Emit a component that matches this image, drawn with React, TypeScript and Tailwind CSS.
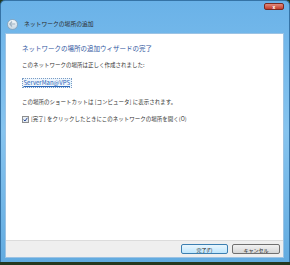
export default function App() {
  return (
    <div className="w-[290px] h-[265px] overflow-hidden bg-[#24381f] font-['Noto_Sans_CJK_JP','Noto_Sans',sans-serif]">
      <div className="h-[262px] flex flex-col bg-gradient-to-b from-[#6ab2e8] via-[#86c4ef] to-[#62abe0] border-l border-r border-t border-[#3573a6] rounded-t-[5px]">
        {/* title bar */}
        <div className="h-[32px] flex flex-col">
          <div className="h-[9px] flex justify-end pr-[5px] pt-[2px]">
            <div className="w-[20px] h-[7px] rounded-[2px] border border-[#7a2a22] bg-gradient-to-b from-[#e08a7c] to-[#c23b2b] flex items-center justify-center">
              <span className="text-[5px] leading-none font-bold text-white">x</span>
            </div>
          </div>
          <div className="flex-1 flex items-center pl-[6px] pt-[5px] gap-[6px]">
            <div className="w-[11px] h-[11px] rounded-full border border-[#8aa7bf] bg-gradient-to-b from-[#f4f8fb] to-[#c7d6e2] flex items-center justify-center">
              <svg width="7" height="6" viewBox="0 0 7 6">
                <path d="M3 0.5 L0.8 3 L3 5.5 M0.8 3 H6.2" stroke="#9fb2c2" strokeWidth="1.2" fill="none" />
              </svg>
            </div>
            <span className="text-[5.8px] leading-none text-[#2a2a2a]">ネットワークの場所の追加</span>
          </div>
        </div>

        {/* body */}
        <div className="flex-1 flex flex-col ml-[4px] mr-[5px] border border-[#9cc3e4]">
          <div className="flex-1 bg-white flex flex-col pl-[16px] pt-[10px]">
            <div className="text-[6.5px] leading-[9px] text-[#2f56a0]">ネットワークの場所の追加ウィザードの完了</div>
            <div className="mt-[8px] text-[5.5px] leading-[8px] text-[#333]">このネットワークの場所は正しく作成されました:</div>
            <div className="mt-[9px] flex">
              <span className="text-[6px] leading-[8px] text-[#2a66b8] underline border border-dotted border-[#7a9cc4] bg-[#eef5fc] px-[0.5px]">ServerMan@VPS</span>
            </div>
            <div className="mt-[10px] text-[5.5px] leading-[8px] text-[#333]">この場所のショートカットは [コンピュータ] に表示されます。</div>
            <div className="mt-[9px] flex items-center gap-[2px]">
              <div className="w-[7px] h-[7px] border border-[#8e8f8f] bg-gradient-to-b from-[#eef2f6] to-[#dfe6ee] flex items-center justify-center">
                <svg width="5" height="5" viewBox="0 0 5 5">
                  <path d="M0.6 2.6 L2 4 L4.4 0.8" stroke="#2a4a9a" strokeWidth="1" fill="none" />
                </svg>
              </div>
              <span className="text-[5.5px] leading-[8px] text-[#333]">[完了] をクリックしたときにこのネットワークの場所を開く(O)</span>
            </div>
          </div>
          <div className="h-[17px] bg-[#efefef] border-t border-[#dcdcdc] flex items-center justify-end gap-[4px] pr-[3px]">
            <div className="w-[47px] h-[10px] rounded-[2px] border border-[#3c7fb1] bg-gradient-to-b from-[#eaf6fd] to-[#bee6fd] flex items-center justify-center">
              <span className="text-[5px] leading-none text-[#222]">完了(F)</span>
            </div>
            <div className="w-[48px] h-[10px] rounded-[2px] border border-[#707070] bg-gradient-to-b from-[#f2f2f2] to-[#d6d6d6] flex items-center justify-center">
              <span className="text-[5px] leading-none text-[#222]">キャンセル</span>
            </div>
          </div>
        </div>
        <div className="h-[4px]" />
      </div>
    </div>
  );
}
